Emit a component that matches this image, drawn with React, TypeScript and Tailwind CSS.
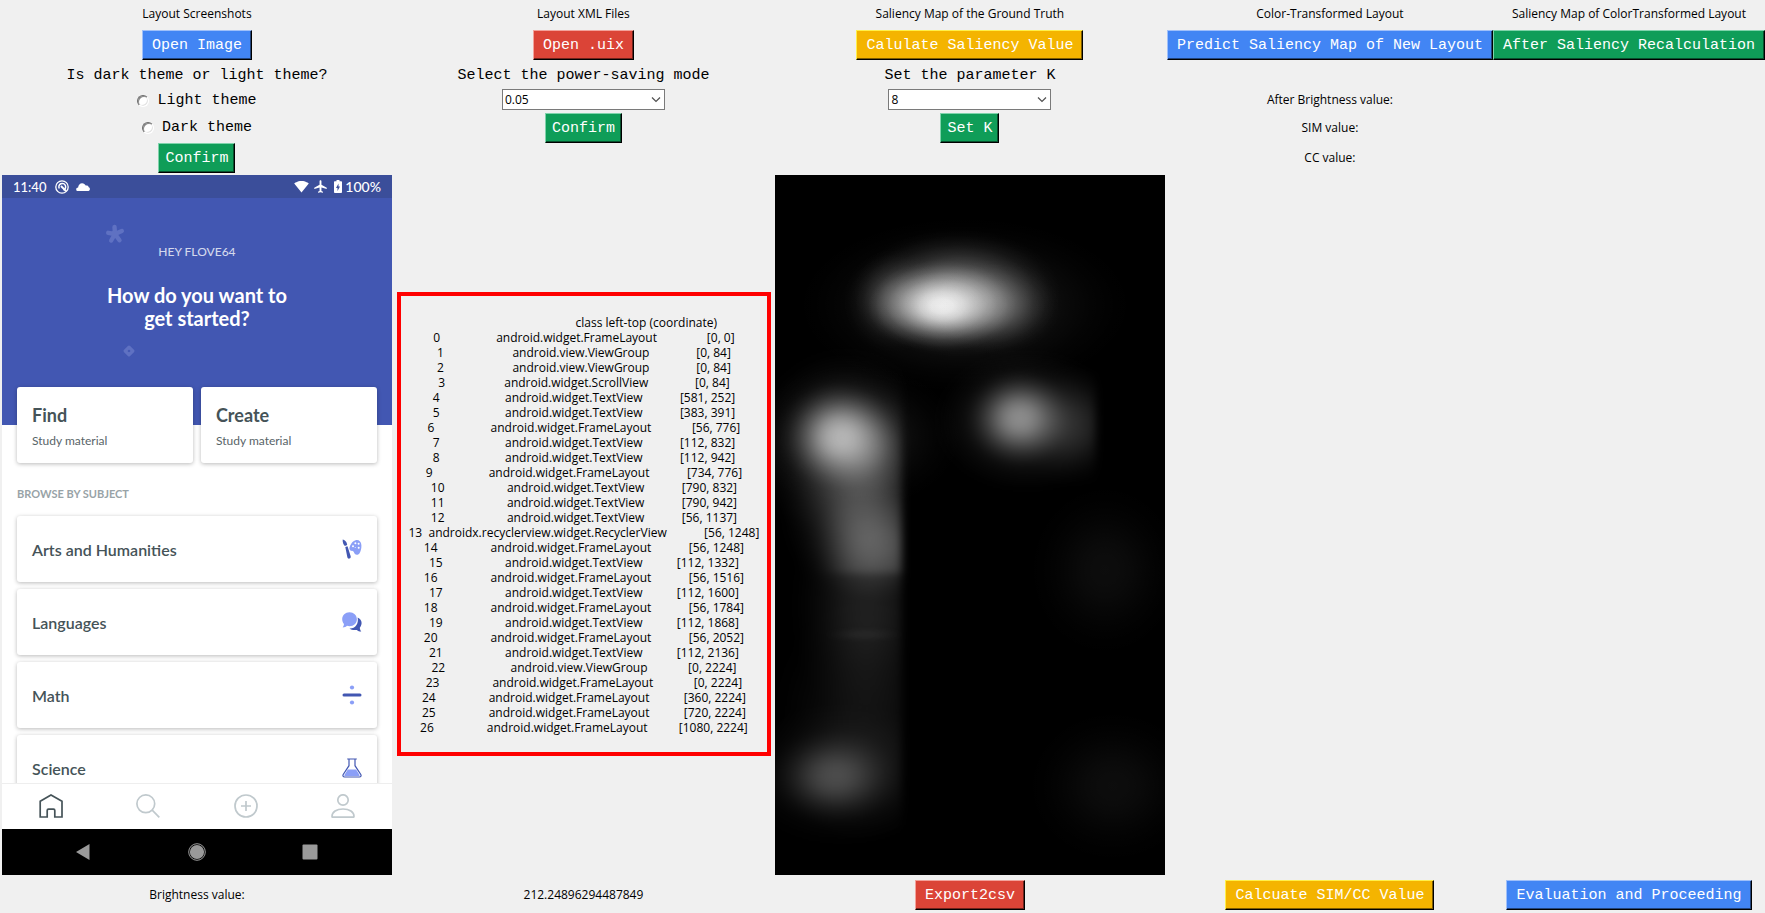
import type { ReactNode } from "react";
import { MdAirplanemodeActive, MdSignalWifi4Bar } from "react-icons/md";

const tones = {
  blue: "border-t-[#a0c0fa] border-l-[#a0c0fa] bg-[#4285f4] shadow-[inset_-1px_-1px_0_#22447c]",
  red: "border-t-[#f3a29b] border-l-[#f3a29b] bg-[#db4437] shadow-[inset_-1px_-1px_0_#70231c]",
  amber: "border-t-[#fff04a] border-l-[#fff04a] bg-[#f4b400] shadow-[inset_-1px_-1px_0_#7d5c00]",
  green: "border-t-[#7fd3ab] border-l-[#7fd3ab] bg-[#0f9d58] shadow-[inset_-1px_-1px_0_#08502d]",
};

function TkButton({ tone, tight, children }: { tone: keyof typeof tones; tight?: boolean; children: ReactNode }) {
  return (
    <button
      type="button"
      className={`h-[30px] border border-r-black border-b-black pt-[2px] font-['Liberation_Mono',monospace] text-[15px] leading-5 whitespace-nowrap text-white ${tight ? "px-[6px]" : "px-[9px]"} ${tones[tone]}`}
    >
      {children}
    </button>
  );
}

function Cell({ place, children }: { place: string; children: ReactNode }) {
  return <div className={`flex items-center justify-center ${place}`}>{children}</div>;
}

function Prompt({ children, htmlFor }: { children: ReactNode; htmlFor?: string }) {
  return (
    <label htmlFor={htmlFor} className="pt-[2px] font-['Liberation_Mono',monospace] text-[15px] leading-5 whitespace-nowrap">
      {children}
    </label>
  );
}

function Radio({ label, value }: { label: string; value: string }) {
  return (
    <label className="flex items-center gap-2 font-['Liberation_Mono',monospace] text-[15px] leading-5">
      <input
        type="radio"
        name="theme"
        value={value}
        className="size-3 appearance-none rounded-full border border-[#ffffff] border-t-[#6b6b6b] border-l-[#6b6b6b] bg-white shadow-[inset_1px_1px_0_#8a8a8a,inset_-1px_-1px_0_#e3e3e3]"
      />
      {label}
    </label>
  );
}

function Combo({ id, values }: { id: string; values: string[] }) {
  return (
    <div className="relative w-[163px]">
      <select
        id={id}
        defaultValue={values[0]}
        className="h-[21px] w-full appearance-none rounded-none border border-[#7a7a7a] bg-white px-[2px] text-[12px] leading-4 text-black"
      >
        {values.map((v) => (
          <option key={v}>{v}</option>
        ))}
      </select>
      <svg className="pointer-events-none absolute top-[7px] right-[4px] h-[7px] w-[10px]" viewBox="0 0 10 7" fill="none" stroke="#505050" strokeWidth="1.2">
        <path d="M1 1.500 5 5.500 9 1.500" />
      </svg>
    </div>
  );
}

const rows: [string, string][] = [
  ["android.widget.FrameLayout", "[0, 0]"],
  ["android.view.ViewGroup", "[0, 84]"],
  ["android.view.ViewGroup", "[0, 84]"],
  ["android.widget.ScrollView", "[0, 84]"],
  ["android.widget.TextView", "[581, 252]"],
  ["android.widget.TextView", "[383, 391]"],
  ["android.widget.FrameLayout", "[56, 776]"],
  ["android.widget.TextView", "[112, 832]"],
  ["android.widget.TextView", "[112, 942]"],
  ["android.widget.FrameLayout", "[734, 776]"],
  ["android.widget.TextView", "[790, 832]"],
  ["android.widget.TextView", "[790, 942]"],
  ["android.widget.TextView", "[56, 1137]"],
  ["androidx.recyclerview.widget.RecyclerView", "[56, 1248]"],
  ["android.widget.FrameLayout", "[56, 1248]"],
  ["android.widget.TextView", "[112, 1332]"],
  ["android.widget.FrameLayout", "[56, 1516]"],
  ["android.widget.TextView", "[112, 1600]"],
  ["android.widget.FrameLayout", "[56, 1784]"],
  ["android.widget.TextView", "[112, 1868]"],
  ["android.widget.FrameLayout", "[56, 2052]"],
  ["android.widget.TextView", "[112, 2136]"],
  ["android.view.ViewGroup", "[0, 2224]"],
  ["android.widget.FrameLayout", "[0, 2224]"],
  ["android.widget.FrameLayout", "[360, 2224]"],
  ["android.widget.FrameLayout", "[720, 2224]"],
  ["android.widget.FrameLayout", "[1080, 2224]"],
];

/* Every line is padded with spaces and then centred as a whole. */
function WidgetTable() {
  return (
    <table className="block w-full border-4 border-[#ff0000] pt-[19px] pb-[17px] text-[12px] leading-[15px] whitespace-pre">
      <thead className="block">
        <tr className="flex justify-center">
          <th className="p-0 font-normal">{"".padEnd(2)}</th>
          <th className="p-0 font-normal">{"class".padStart(43)}</th>
          <th className="p-0 font-normal">{" left-top (coordinate)"}</th>
        </tr>
      </thead>
      <tbody className="block">
        {rows.map(([name, at], i) => (
          <tr key={i} className="flex justify-center">
            <td className="p-0">{String(i).padEnd(2)}</td>
            <td className="p-0">{name.padStart(43)}</td>
            <td className="p-0">{at.padStart(22)}</td>
          </tr>
        ))}
      </tbody>
    </table>
  );
}

const ArtIcon = (
  <svg viewBox="0 0 20 20" className="size-5">
    <path fill="#8b9ff7" d="M13.600 1.200C16.900.6 19.300 2.700 19.400 6.300c.1 3.200-.6 6.400-2 8.100-1.300 1.600-3.300 1.700-4.500.5-.8-.8-.7-1.800-1.500-2.500-.8-.6-1.900-.2-3-.9C7 10.600 7.200 8.500 8.200 6.600 9.400 4 11.300 1.600 13.600 1.200Z" />
    <g fill="#fff">
      <circle cx="13.400" cy="4.300" r="1" />
      <circle cx="16.600" cy="4.800" r="1" />
      <circle cx="11" cy="7.200" r="1" />
      <circle cx="16.700" cy="8.700" r="1" />
      <circle cx="13.200" cy="8.500" r=".5" />
    </g>
    <path fill="#4257b2" d="M.7.4C2.700 1 4.400 2.400 4.800 4.300L5.200 6.100 2.900 7C1.200 5.500.5 2.900.7.4ZM3.300 8l2.200-.8 3.100 9.900c.4 1.300-.2 2.200-1.100 2.500-1 .3-1.900-.2-2.200-1.500Z" />
  </svg>
);

const ChatIcon = (
  <svg viewBox="0 0 20 20" className="size-5">
    <path fill="#4257b2" d="M15.600 5.400c2.500 1.100 4 3.200 4 5.600 0 1.900-.8 3.500-1.800 4.700.1 1.500.6 2.600 1.500 3.800-1.900 0-3.300-.6-4.400-1.600-2.600.5-5.600.2-7.400-1.500 5.400.4 9.600-4.700 8.100-11Z" />
    <path fill="#8b9ff7" d="M7.500.3c4.200 0 7.400 2.900 7.400 6.900s-3.200 7-7.400 7c-.8 0-1.700-.1-2.500-.4-1 .9-2.500 1.600-4.300 1.700.8-1 1.200-2.100 1.300-3.400C.8 10.700.2 9 .2 7.200.2 3.200 3.300.3 7.500.3Z" />
  </svg>
);

const DivideIcon = (
  <svg viewBox="0 0 20 20" className="size-5">
    <rect x=".5" y="8.500" width="19" height="3" rx="1.500" fill="#4257b2" />
    <circle cx="10" cy="2.500" r="2.100" fill="#8b9ff7" />
    <circle cx="10" cy="17.500" r="2.100" fill="#8b9ff7" />
  </svg>
);

const FlaskIcon = (
  <svg viewBox="0 0 20 20" className="size-5">
    <path d="M5.800 11.500h8.300l3.300 5.200c.4.700 0 1.400-.8 1.400H3.300c-.8 0-1.200-.7-.8-1.400Z" fill="#8b9ff7" />
    <path d="M5.200 1h9.600M7 1v6.700L1.200 16.500C.5 17.800 1.200 19 2.500 19h15c1.300 0 2-1.200 1.300-2.500L13 7.700V1" fill="none" stroke="#4257b2" strokeWidth="1.200" />
  </svg>
);

const subjects = [
  { name: "Arts and Humanities", icon: ArtIcon },
  { name: "Languages", icon: ChatIcon },
  { name: "Math", icon: DivideIcon },
  { name: "Science", icon: FlaskIcon },
];

const card = "rounded-[3px] bg-white shadow-[0_1px_4px_rgba(0,0,0,0.28)]";

function Phone() {
  return (
    <div className="flex h-[700px] w-full flex-col overflow-hidden bg-white font-['Lato',sans-serif] text-[#455358]">
      <div className="flex h-[23px] shrink-0 items-center bg-[#3b4e9a] px-[11px] text-[13px] leading-4 font-medium text-white">
        <span>11:40</span>
        <svg viewBox="0 0 14 14" className="ml-[9px] size-[14px]" fill="none" stroke="#fff">
          <circle cx="7" cy="7" r="6.200" strokeWidth="1.300" />
          <path d="M4.300 8.500A3.400 3.400 0 1 1 8.500 10" strokeWidth="1.500" />
          <path d="M6 6l5 5.200" strokeWidth="1.900" />
        </svg>
        <svg viewBox="0 0 14 8" className="ml-[7px] h-2 w-[14px]" fill="#fff">
          <path d="M2 8C.9 8 .2 7.300.2 6.400c0-1 .8-1.700 1.900-1.800C2.300 2 4 .2 6.100.2c1.700 0 3 .9 3.600 2.400.3-.1.500-.1.800-.1 1.200 0 2 .7 2.200 1.700.7.200 1.200.9 1.200 1.700C13.900 7.200 13 8 11.900 8Z" />
        </svg>
        <div className="ml-auto flex items-center">
          <MdSignalWifi4Bar className="size-[15px]" />
          <MdAirplanemodeActive className="ml-[4px] size-[15px]" />
          <svg viewBox="0 0 8 13" className="ml-[6px] h-[13px] w-2">
            <path d="M2.500 0h3v1.300h1.700c.5 0 .8.300.8.800v10c0 .5-.3.900-.8.900H.8c-.5 0-.8-.4-.8-.9v-10c0-.5.3-.8.8-.8h1.700Z" fill="#fff" />
            <path d="M4.500 3.500 2 8h1.500v3L6 6.600H4.500Z" fill="#3b4e9a" />
          </svg>
          <span className="ml-[3px] text-[14px]">100%</span>
        </div>
      </div>

      <div className="relative shrink-0 bg-[#4257b2] px-[15px] pt-[46px] text-center text-white">
        <svg viewBox="0 0 20 20" className="absolute top-[26px] left-[103px] size-5" stroke="#5f71c2" strokeWidth="4.400" strokeLinecap="round">
          <path d="M10 10 9.500 3M10 10l6.800-3M10 10l4.500 6.300M10 10l-3.800 6.500M10 10 3.200 8.800" />
        </svg>
        <svg viewBox="0 0 12 12" className="absolute top-[147px] left-[121px] size-3" fill="none" stroke="#5f71c2" strokeWidth="3.200" strokeLinejoin="round">
          <path d="M6 2.200 9.800 6 6 9.800 2.200 6Z" />
        </svg>
        <p className="text-[12px] leading-4 font-medium text-[#d3d8ec]">HEY FLOVE64</p>
        <h1 className="mt-[24px] text-[20px] leading-[23px] font-bold">
          How do you want to
          <br />
          get started?
        </h1>
        <div className="mt-[57px] -mb-[38px] grid grid-cols-2 gap-2 text-left">
          {["Find", "Create"].map((t) => (
            <div key={t} className={`h-[76px] px-[15px] pt-[18px] ${card}`}>
              <h2 className="text-[18px] leading-5 font-bold text-[#455358]">{t}</h2>
              <p className="mt-[8px] text-[12px] leading-4 text-[#586468]">Study material</p>
            </div>
          ))}
        </div>
      </div>

      <div className="min-h-0 flex-1 overflow-hidden px-[15px] pt-[61px]">
        <h3 className="text-[11px] leading-4 font-bold text-[#98a3a7]">BROWSE BY SUBJECT</h3>
        <ul className="mt-[14px] flex flex-col gap-[7px]">
          {subjects.map((s) => (
            <li key={s.name} className={`flex h-[66px] items-center justify-between px-[15px] ${card}`}>
              <span className="pt-[2px] text-[16px] leading-5 font-semibold">{s.name}</span>
              {s.icon}
            </li>
          ))}
        </ul>
      </div>

      <div className="relative grid h-[46px] shrink-0 grid-cols-4 place-items-center border-t border-[#eeeeee] bg-white pb-[1px]">
        <svg viewBox="0 0 24 24" className="size-6" fill="none" stroke="#455358" strokeWidth="1.700">
          <path d="M1.200 23V7.300L12 1l11 6.300V23h-7.200v-6.500c0-1-.5-1.300-1.300-1.300h-5c-.8 0-1.300.3-1.300 1.300V23Z" />
        </svg>
        <svg viewBox="0 0 24 24" className="size-6" fill="none" stroke="#c0c9cd" strokeWidth="1.700">
          <circle cx="9.800" cy="9.800" r="8.900" />
          <path d="m16.200 16.200 7.100 7.100" />
        </svg>
        <svg viewBox="0 0 24 24" className="size-6" fill="none" stroke="#c0c9cd" strokeWidth="1.700">
          <circle cx="12" cy="12" r="11" />
          <path d="M12 7v10M7 12h10" />
        </svg>
        <svg viewBox="0 0 24 24" className="size-6" fill="none" stroke="#c0c9cd" strokeWidth="1.700">
          <circle cx="12" cy="6" r="5.200" />
          <path d="M1 22.500c0-4.500 4.500-7.500 11-7.500s11 3 11 7.500c0 .5-.3.7-.8.7H1.800c-.5 0-.8-.2-.8-.7Z" />
        </svg>
      </div>

      <div className="flex h-[46px] shrink-0 items-center justify-around bg-black px-[26px]">
        <svg viewBox="0 0 18 18" className="size-[18px]" fill="#9a9a9a">
          <path d="M14.500 1v16L1 9Z" />
        </svg>
        <svg viewBox="0 0 18 18" className="size-[18px]">
          <circle cx="9" cy="9" r="8.300" fill="none" stroke="#9a9a9a" />
          <circle cx="9" cy="9" r="7.100" fill="#9a9a9a" />
        </svg>
        <svg viewBox="0 0 18 18" className="size-[18px]" fill="#9a9a9a">
          <rect x="1.500" y="1.500" width="15" height="15" rx="1" />
        </svg>
      </div>
    </div>
  );
}

/* x, y, rx, ry, strength */
type Spot = [number, number, number, number, number];

const topSpots: Spot[] = [
  [167, 131, 74, 46, 0.88],
  [182, 118, 104, 64, 0.4],
  [220, 132, 66, 48, 0.24],
  [118, 126, 50, 52, 0.2],
  [190, 130, 170, 90, 0.12],
];

const leftSpots: Spot[] = [
  [63, 261, 58, 56, 0.56],
  [92, 270, 54, 58, 0.2],
  [70, 270, 95, 100, 0.2],
  [88, 335, 84, 96, 0.26],
  [104, 372, 72, 56, 0.16],
  [92, 430, 80, 120, 0.12],
  [90, 545, 100, 130, 0.07],
  [58, 602, 66, 50, 0.2],
  [68, 600, 110, 75, 0.1],
];

const middleSpots: Spot[] = [
  [244, 243, 54, 50, 0.44],
  [252, 246, 96, 74, 0.2],
  [300, 252, 60, 64, 0.1],
];

const faintSpots: Spot[] = [
  [330, 395, 80, 90, 0.05],
  [338, 611, 90, 80, 0.05],
];

function Spots({ items }: { items: Spot[] }) {
  return (
    <>
      {items.map(([x, y, rx, ry, o], i) => (
        <ellipse key={i} cx={x} cy={y} rx={rx} ry={ry} fill="url(#spot)" opacity={o} />
      ))}
    </>
  );
}

function SaliencyMap() {
  return (
    <svg viewBox="0 0 390 700" preserveAspectRatio="none" className="block h-[700px] w-full bg-black" role="img">
      <defs>
        <radialGradient id="spot">
          <stop offset="0" stopColor="#fff" stopOpacity="1" />
          <stop offset=".15" stopColor="#fff" stopOpacity=".95" />
          <stop offset=".3" stopColor="#fff" stopOpacity=".78" />
          <stop offset=".45" stopColor="#fff" stopOpacity=".53" />
          <stop offset=".6" stopColor="#fff" stopOpacity=".3" />
          <stop offset=".75" stopColor="#fff" stopOpacity=".13" />
          <stop offset=".9" stopColor="#fff" stopOpacity=".03" />
          <stop offset="1" stopColor="#fff" stopOpacity="0" />
        </radialGradient>
        <linearGradient id="band" x1="0" y1="0" x2="0" y2="1">
          <stop offset="0" stopColor="#fff" stopOpacity="0" />
          <stop offset="1" stopColor="#fff" stopOpacity="1" />
        </linearGradient>
        <clipPath id="leftEdge">
          <rect x="-40" y="150" width="167" height="560" />
        </clipPath>
        <clipPath id="middleEdge">
          <rect x="150" y="150" width="171" height="200" />
        </clipPath>
        <filter id="edge" filterUnits="userSpaceOnUse" x="-60" y="0" width="500" height="760">
          <feGaussianBlur stdDeviation="4 2" />
        </filter>
        <filter id="bandBlur" filterUnits="userSpaceOnUse" x="-60" y="0" width="500" height="760">
          <feGaussianBlur stdDeviation="12 3" />
        </filter>
      </defs>
      <Spots items={topSpots} />
      <Spots items={[[80, 262, 110, 75, 0.1]]} />
      <g filter="url(#edge)">
        <g clipPath="url(#leftEdge)">
          <Spots items={leftSpots} />
          <rect x="62" y="310" width="90" height="88" fill="url(#band)" opacity=".1" filter="url(#bandBlur)" />
        </g>
      </g>
      <g filter="url(#edge)">
        <g clipPath="url(#middleEdge)">
          <Spots items={middleSpots} />
        </g>
      </g>
      <rect x="66" y="457" width="46" height="5" fill="#fff" opacity=".07" filter="url(#bandBlur)" />
      <Spots items={faintSpots} />
    </svg>
  );
}

export default function App() {
  return (
    <main className="grid min-h-screen grid-cols-[394fr_379fr_394fr_326fr_272fr] grid-rows-[28px_32px_29px_24px_30px_30px_auto_1fr] overflow-x-hidden bg-[#f0f0f0] font-['Open_Sans','Noto_Sans_CJK_TC',sans-serif] text-[12px] leading-4 text-black">
      <Cell place="col-start-1 row-start-1">Layout Screenshots</Cell>
      <Cell place="col-start-2 row-start-1">Layout XML Files</Cell>
      <Cell place="col-start-3 row-start-1">Saliency Map of the Ground Truth</Cell>
      <Cell place="col-start-4 row-start-1">Color-Transformed Layout</Cell>
      <Cell place="col-start-5 row-start-1">Saliency Map of ColorTransformed Layout</Cell>

      <Cell place="col-start-1 row-start-2 self-end"><TkButton tone="blue">Open Image</TkButton></Cell>
      <Cell place="col-start-2 row-start-2 self-end"><TkButton tone="red">Open .uix</TkButton></Cell>
      <Cell place="col-start-3 row-start-2 self-end"><TkButton tone="amber">Calulate Saliency Value</TkButton></Cell>
      <Cell place="col-start-4 row-start-2 self-end"><TkButton tone="blue">Predict Saliency Map of New Layout</TkButton></Cell>
      <Cell place="col-start-5 row-start-2 self-end"><TkButton tone="green">After Saliency Recalculation</TkButton></Cell>

      <Cell place="col-start-1 row-start-3"><Prompt>Is dark theme or light theme?</Prompt></Cell>
      <Cell place="col-start-2 row-start-3"><Prompt htmlFor="mode">Select the power-saving mode</Prompt></Cell>
      <Cell place="col-start-3 row-start-3"><Prompt htmlFor="k">Set the parameter K</Prompt></Cell>

      <Cell place="col-start-1 row-start-4"><Radio label="Light theme" value="light" /></Cell>
      <Cell place="col-start-2 row-start-4 self-start"><Combo id="mode" values={["0.05", "0.1", "0.15"]} /></Cell>
      <Cell place="col-start-3 row-start-4 self-start"><Combo id="k" values={["8", "16", "32"]} /></Cell>
      <Cell place="col-start-4 row-start-4 pb-[2px]">After Brightness value:</Cell>

      <Cell place="col-start-1 row-start-5"><Radio label="Dark theme" value="dark" /></Cell>
      <Cell place="col-start-2 row-start-5"><TkButton tone="green" tight>Confirm</TkButton></Cell>
      <Cell place="col-start-3 row-start-5"><TkButton tone="green" tight>Set K</TkButton></Cell>
      <Cell place="col-start-4 row-start-5">SIM value:</Cell>

      <Cell place="col-start-1 row-start-6"><TkButton tone="green" tight>Confirm</TkButton></Cell>
      <Cell place="col-start-4 row-start-6">CC value:</Cell>

      <Cell place="col-start-1 row-start-7 p-[2px]"><Phone /></Cell>
      <Cell place="col-start-2 row-start-7 pr-[2px] pb-[2px] pl-[3px]"><WidgetTable /></Cell>
      <Cell place="col-start-3 row-start-7 p-[2px]"><SaliencyMap /></Cell>

      <Cell place="col-start-1 row-start-8">Brightness value:</Cell>
      <Cell place="col-start-2 row-start-8">212.24896294487849</Cell>
      <Cell place="col-start-3 row-start-8"><TkButton tone="red">Export2csv</TkButton></Cell>
      <Cell place="col-start-4 row-start-8"><TkButton tone="amber">Calcuate SIM/CC Value</TkButton></Cell>
      <Cell place="col-start-5 row-start-8"><TkButton tone="blue">Evaluation and Proceeding</TkButton></Cell>
    </main>
  );
}
